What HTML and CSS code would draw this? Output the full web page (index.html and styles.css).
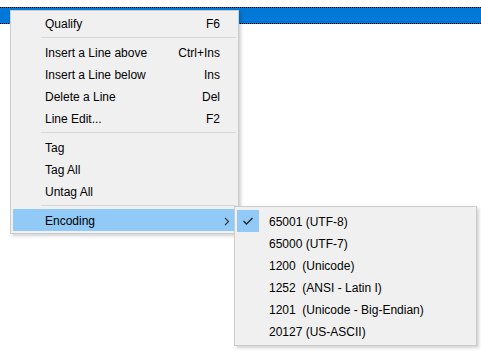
FILE: index.html
```html
<!DOCTYPE html>
<html>
<head>
<meta charset="utf-8">
<link rel="stylesheet" href="styles.css">
</head>
<body>
<div class="titlebar"></div>

<div class="menu main-menu">
  <div class="item"><span class="label">Qualify</span><span class="key">F6</span><span class="arrow"></span></div>
  <div class="sep"></div>
  <div class="item"><span class="label">Insert a Line above</span><span class="key">Ctrl+Ins</span><span class="arrow"></span></div>
  <div class="item"><span class="label">Insert a Line below</span><span class="key">Ins</span><span class="arrow"></span></div>
  <div class="item"><span class="label">Delete a Line</span><span class="key">Del</span><span class="arrow"></span></div>
  <div class="item"><span class="label">Line Edit...</span><span class="key">F2</span><span class="arrow"></span></div>
  <div class="sep"></div>
  <div class="item"><span class="label">Tag</span><span class="key"></span><span class="arrow"></span></div>
  <div class="item"><span class="label">Tag All</span><span class="key"></span><span class="arrow"></span></div>
  <div class="item"><span class="label">Untag All</span><span class="key"></span><span class="arrow"></span></div>
  <div class="sep"></div>
  <div class="item hot"><span class="label">Encoding</span><span class="key"></span><span class="arrow"><svg width="6" height="9" viewBox="0 0 6 9"><path d="M1 1 L4.5 4.5 L1 8" fill="none" stroke="#333" stroke-width="1.1"/></svg></span></div>
</div>

<div class="menu sub-menu">
  <div class="sitem"><span class="check checked"><svg width="12" height="10" viewBox="0 0 12 10"><path d="M1.5 5 L4.5 8 L10.5 2" fill="none" stroke="#222" stroke-width="1.3"/></svg></span><span class="label">65001 (UTF-8)</span></div>
  <div class="sitem"><span class="check"></span><span class="label">65000 (UTF-7)</span></div>
  <div class="sitem"><span class="check"></span><span class="label">1200&nbsp; (Unicode)</span></div>
  <div class="sitem"><span class="check"></span><span class="label">1252&nbsp; (ANSI - Latin I)</span></div>
  <div class="sitem"><span class="check"></span><span class="label">1201&nbsp; (Unicode - Big-Endian)</span></div>
  <div class="sitem"><span class="check"></span><span class="label">20127 (US-ASCII)</span></div>
</div>
</body>
</html>
```
FILE: styles.css
```css
html, body {
  margin: 0;
  padding: 0;
  background: #ffffff;
  width: 481px;
  height: 351px;
  overflow: hidden;
  font-family: "Liberation Sans", Arial, sans-serif;
  font-size: 12px;
  color: #000;
}

.titlebar {
  margin-top: 7px;
  height: 15px;
  background: #0078d7;
  border-top: 1px dotted #000;
  border-bottom: 1px dotted #000;
}

.menu {
  position: absolute;
  background: #f0f0f0;
  border: 1px solid #cccccc;
  box-shadow: 2px 2px 3px rgba(0, 0, 0, 0.18);
  display: flex;
  flex-direction: column;
}

.main-menu {
  left: 10px;
  top: 10px;
  width: 222px;
  padding: 1px 3px 2px 2px;
}

.item {
  height: 22px;
  box-sizing: border-box;
  padding-top: 2px;
  display: flex;
  align-items: center;
  padding-left: 32px;
}

.item .label {
  flex: 1;
}

.item .key {
  text-align: right;
}

.item .arrow {
  width: 15px;
  display: flex;
  justify-content: flex-end;
  padding-right: 5px;
  box-sizing: border-box;
}

.item.hot {
  background: #91c9f7;
}

.sep {
  height: 7px;
  display: flex;
  align-items: center;
  margin-left: 28px;
  margin-right: -1px;
}

.sep::before {
  content: "";
  flex: 1;
  height: 1px;
  background: #d7d7d7;
}

.sub-menu {
  left: 234px;
  top: 206px;
  width: 237px;
  padding: 3px 2px;
}

.sitem {
  height: 22px;
  display: flex;
  align-items: center;
}

.sitem .label {
  padding-top: 2px;
}

.check {
  width: 22px;
  height: 22px;
  margin-right: 10px;
  display: flex;
  align-items: center;
  justify-content: center;
}

.check.checked {
  background: #91c9f7;
}
```
